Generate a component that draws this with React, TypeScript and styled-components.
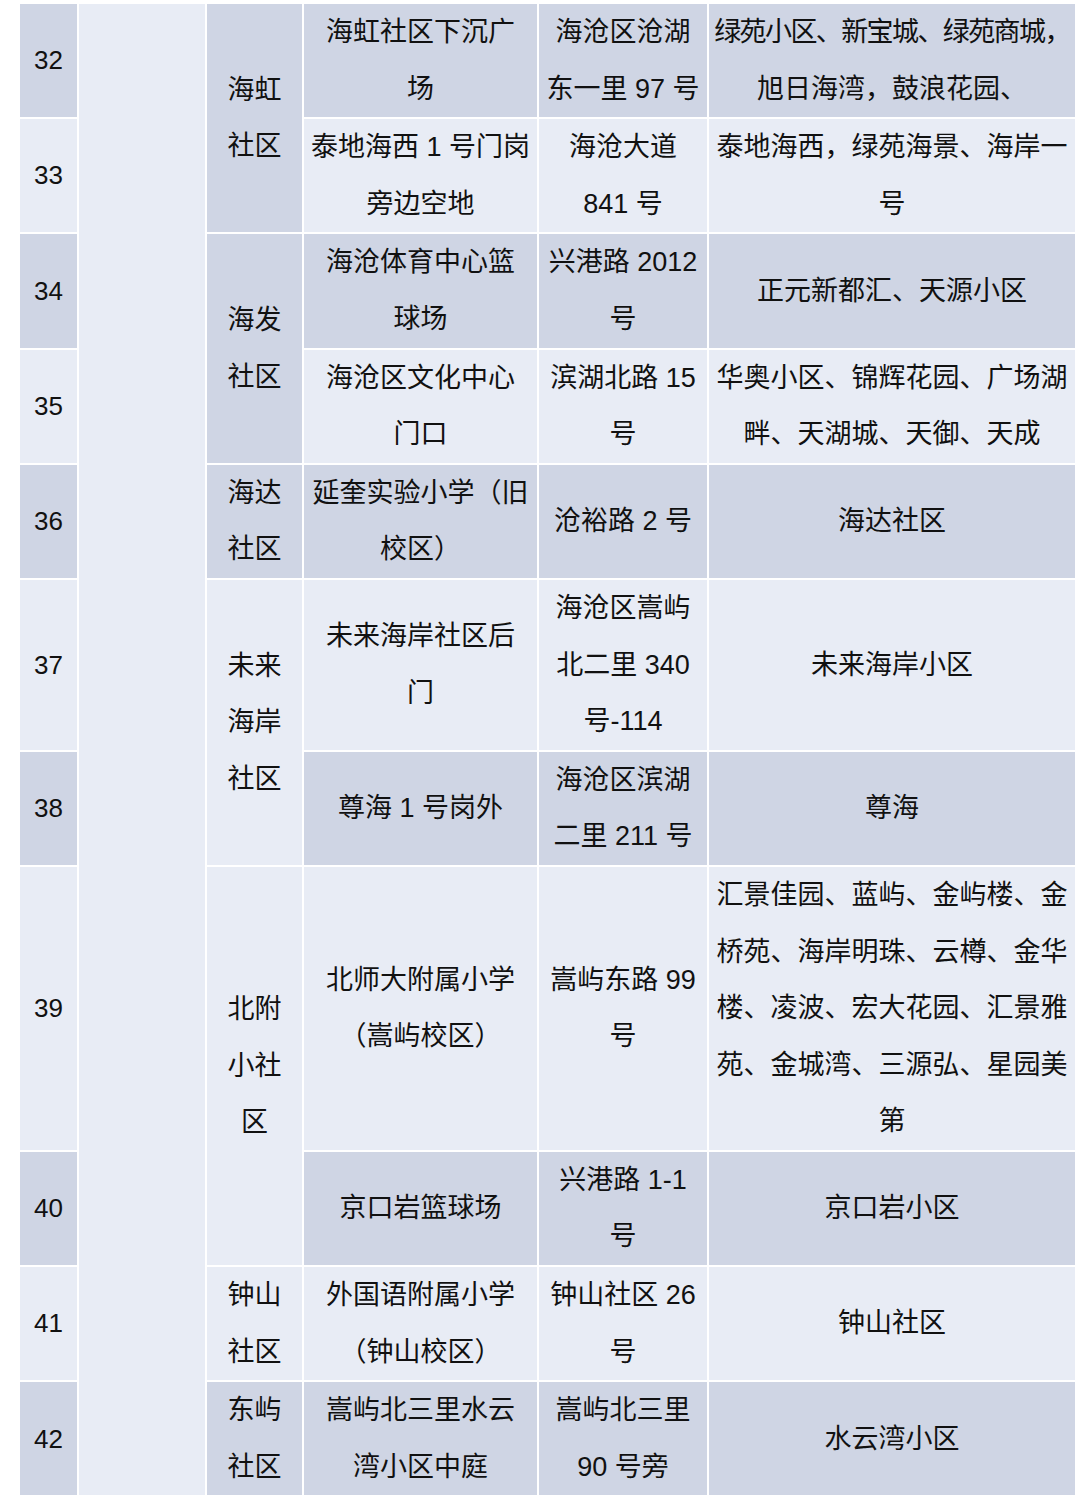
import styled, { createGlobalStyle } from "styled-components";

const GlobalStyle = createGlobalStyle`
  html, body {
    margin: 0;
    padding: 0;
    background: #ffffff;
  }
`;

const Page = styled.div`
  padding: 2px 0 0 18px;
  font-family: "Liberation Sans", "Noto Sans CJK SC", sans-serif;
`;

const Table = styled.table`
  border-collapse: collapse;
  table-layout: fixed;
  width: 1057px;
  color: #111111;
  font-size: 27px;
`;

const Col = styled.col<{ $w: number }>`
  width: ${(p) => p.$w}px;
`;

const Cell = styled.td<{ $tone: "dark" | "light" }>`
  background: ${(p) => (p.$tone === "dark" ? "#cfd5e4" : "#e8ecf5")};
  border: 2px solid #ffffff;
  padding: 0;
  line-height: 56.6px;
  text-align: center;
  vertical-align: middle;
`;

const NumCell = styled(Cell)`
  font-size: 26px;
`;

const Line = styled.span<{ $tight?: boolean }>`
  display: block;
  white-space: nowrap;
  letter-spacing: ${(p) => (p.$tight ? "-1.6px" : "0")};
`;

type Tone = "dark" | "light";

type Row = {
  no: number;
  tone: Tone;
  community?: { lines: string[]; span: number };
  place: string[];
  addr: string[];
  area: string[];
};

const widths = [59, 128, 97, 235, 170, 368];

const rows: Row[] = [
  {
    no: 32,
    tone: "dark",
    community: { lines: ["海虹", "社区"], span: 2 },
    place: ["海虹社区下沉广", "场"],
    addr: ["海沧区沧湖", "东一里 97 号"],
    area: ["绿苑小区、新宝城、绿苑商城，", "旭日海湾，鼓浪花园、"],
  },
  {
    no: 33,
    tone: "light",
    place: ["泰地海西 1 号门岗", "旁边空地"],
    addr: ["海沧大道", "841 号"],
    area: ["泰地海西，绿苑海景、海岸一", "号"],
  },
  {
    no: 34,
    tone: "dark",
    community: { lines: ["海发", "社区"], span: 2 },
    place: ["海沧体育中心篮", "球场"],
    addr: ["兴港路 2012", "号"],
    area: ["正元新都汇、天源小区"],
  },
  {
    no: 35,
    tone: "light",
    place: ["海沧区文化中心", "门口"],
    addr: ["滨湖北路 15", "号"],
    area: ["华奥小区、锦辉花园、广场湖", "畔、天湖城、天御、天成"],
  },
  {
    no: 36,
    tone: "dark",
    community: { lines: ["海达", "社区"], span: 1 },
    place: ["延奎实验小学（旧", "校区）"],
    addr: ["沧裕路 2 号"],
    area: ["海达社区"],
  },
  {
    no: 37,
    tone: "light",
    community: { lines: ["未来", "海岸", "社区"], span: 2 },
    place: ["未来海岸社区后", "门"],
    addr: ["海沧区嵩屿", "北二里 340", "号-114"],
    area: ["未来海岸小区"],
  },
  {
    no: 38,
    tone: "dark",
    place: ["尊海 1 号岗外"],
    addr: ["海沧区滨湖", "二里 211 号"],
    area: ["尊海"],
  },
  {
    no: 39,
    tone: "light",
    community: { lines: ["北附", "小社", "区"], span: 2 },
    place: ["北师大附属小学", "（嵩屿校区）"],
    addr: ["嵩屿东路 99", "号"],
    area: [
      "汇景佳园、蓝屿、金屿楼、金",
      "桥苑、海岸明珠、云樽、金华",
      "楼、凌波、宏大花园、汇景雅",
      "苑、金城湾、三源弘、星园美",
      "第",
    ],
  },
  {
    no: 40,
    tone: "dark",
    place: ["京口岩篮球场"],
    addr: ["兴港路 1-1", "号"],
    area: ["京口岩小区"],
  },
  {
    no: 41,
    tone: "light",
    community: { lines: ["钟山", "社区"], span: 1 },
    place: ["外国语附属小学", "（钟山校区）"],
    addr: ["钟山社区 26", "号"],
    area: ["钟山社区"],
  },
  {
    no: 42,
    tone: "dark",
    community: { lines: ["东屿", "社区"], span: 1 },
    place: ["嵩屿北三里水云", "湾小区中庭"],
    addr: ["嵩屿北三里", "90 号旁"],
    area: ["水云湾小区"],
  },
];

function Lines({ items }: { items: string[] }) {
  return (
    <>
      {items.map((t, i) => (
        <Line key={i} $tight={t.length > 13}>
          {t}
        </Line>
      ))}
    </>
  );
}

export default function App() {
  return (
    <>
      <GlobalStyle />
      <Page>
        <Table>
          <colgroup>
            {widths.map((w, i) => (
              <Col key={i} $w={w} />
            ))}
          </colgroup>
          <tbody>
            {rows.map((r, idx) => (
              <tr key={r.no}>
                <NumCell $tone={r.tone}>{r.no}</NumCell>
                {idx === 0 && <Cell $tone="light" rowSpan={rows.length} />}
                {r.community && (
                  <Cell $tone={r.tone} rowSpan={r.community.span}>
                    <Lines items={r.community.lines} />
                  </Cell>
                )}
                <Cell $tone={r.tone}>
                  <Lines items={r.place} />
                </Cell>
                <Cell $tone={r.tone}>
                  <Lines items={r.addr} />
                </Cell>
                <Cell $tone={r.tone}>
                  <Lines items={r.area} />
                </Cell>
              </tr>
            ))}
          </tbody>
        </Table>
      </Page>
    </>
  );
}
